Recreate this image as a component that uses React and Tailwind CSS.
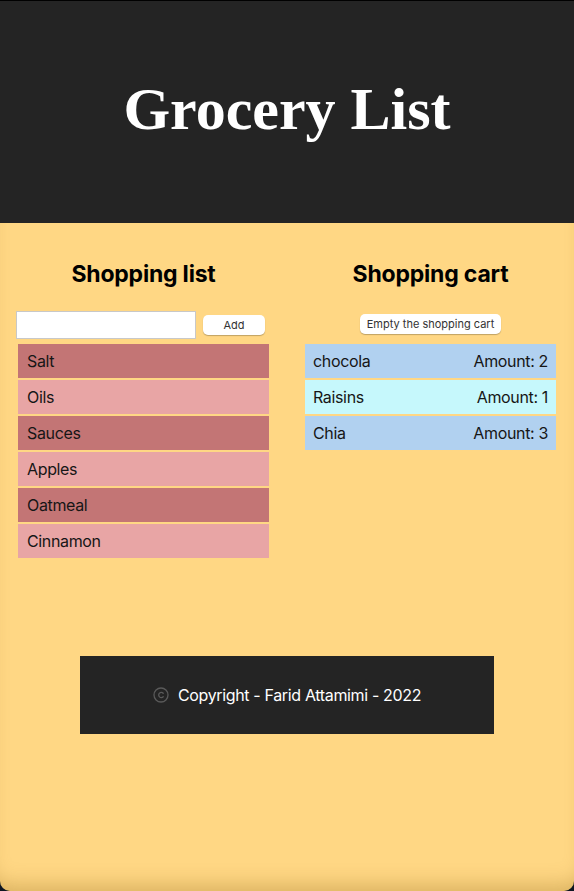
import React, { useState } from 'react';

const initialItems = ['Salt', 'Oils', 'Sauces', 'Apples', 'Oatmeal', 'Cinnamon'];

const initialCart = [
  { name: 'chocola', amount: 2 },
  { name: 'Raisins', amount: 1 },
  { name: 'Chia', amount: 3 },
];

const CopyrightIcon = () => (
  <svg width="16" height="16" viewBox="0 0 16 16" fill="none" stroke="#5a5a5a" strokeWidth="1.3">
    <circle cx="8" cy="8" r="7" />
    <path d="M10.2 6.2a2.6 2.6 0 1 0 0 3.6" strokeLinecap="round" />
  </svg>
);

const App = () => {
  const [items, setItems] = useState(initialItems);
  const [cart, setCart] = useState(initialCart);
  const [text, setText] = useState('');

  const handleAdd = () => {
    if (!text.trim()) return;
    setItems([...items, text.trim()]);
    setText('');
  };

  return (
    <div className="h-[891px] bg-[#0d1622] font-['Inter','Noto_Sans',sans-serif]">
      <div className="flex h-full flex-col overflow-hidden rounded-b-[10px] bg-[#ffd784] shadow-[inset_0_-18px_20px_-12px_rgba(150,110,30,0.35)]">
        <header className="flex h-[223px] shrink-0 items-center justify-center border-t border-black bg-[#242424]">
          <h1 className="mt-[-6px] font-['Liberation_Serif','Times_New_Roman',serif] text-[60px] font-bold text-white">
            Grocery List
          </h1>
        </header>

        <main className="grid grid-cols-2">
          <section className="flex flex-col items-center">
            <h2 className="mt-[36px] text-[23px] font-bold leading-[30px] tracking-[-0.2px] text-black">Shopping list</h2>
            <div className="mt-[22px] flex w-full items-center pl-[16px]">
              <input
                value={text}
                onChange={e => setText(e.target.value)}
                className="h-[28px] w-[180px] border border-[#c8c8c8] bg-white px-1 text-sm outline-none"
              />
              <button
                onClick={handleAdd}
                className="ml-[7px] h-[20px] w-[62px] rounded-[5px] bg-white text-[11px] text-[#333] shadow-[0_1px_1px_rgba(0,0,0,0.25)]"
              >
                Add
              </button>
            </div>
            <ul className="mt-[5px] flex w-[251px] flex-col gap-[2px]">
              {items.map((item, i) => (
                <li
                  key={item + i}
                  className={`flex h-[34px] items-center px-[9px] text-[16px] tracking-[-0.35px] text-[#161616] ${i % 2 === 0 ? 'bg-[#c37575]' : 'bg-[#e8a5a5]'}`}
                >
                  {item}
                </li>
              ))}
            </ul>
          </section>

          <section className="flex flex-col items-center">
            <h2 className="mt-[36px] text-[23px] font-bold leading-[30px] tracking-[-0.2px] text-black">Shopping cart</h2>
            <button
              onClick={() => setCart([])}
              className="mt-[25px] h-[20px] w-[141px] rounded-[5px] bg-white text-[11px] text-[#333] shadow-[0_1px_1px_rgba(0,0,0,0.25)]"
            >
              Empty the shopping cart
            </button>
            <ul className="mt-[10px] flex w-[251px] flex-col gap-[2px]">
              {cart.map((c, i) => (
                <li
                  key={c.name}
                  className={`flex h-[34px] items-center justify-between px-[8px] text-[16px] tracking-[-0.35px] text-[#161616] ${i % 2 === 0 ? 'bg-[#b1d1f0]' : 'bg-[#c6f8fc]'}`}
                >
                  <span>{c.name}</span>
                  <span>Amount: {c.amount}</span>
                </li>
              ))}
            </ul>
          </section>
        </main>

        <footer className="mx-auto mt-[98px] flex h-[78px] w-[414px] items-center justify-center gap-[9px] bg-[#242424] text-[16px] tracking-[-0.35px] text-white">
          <CopyrightIcon />
          <span>Copyright - Farid Attamimi - 2022</span>
        </footer>
      </div>
    </div>
  );
};

export default App;
